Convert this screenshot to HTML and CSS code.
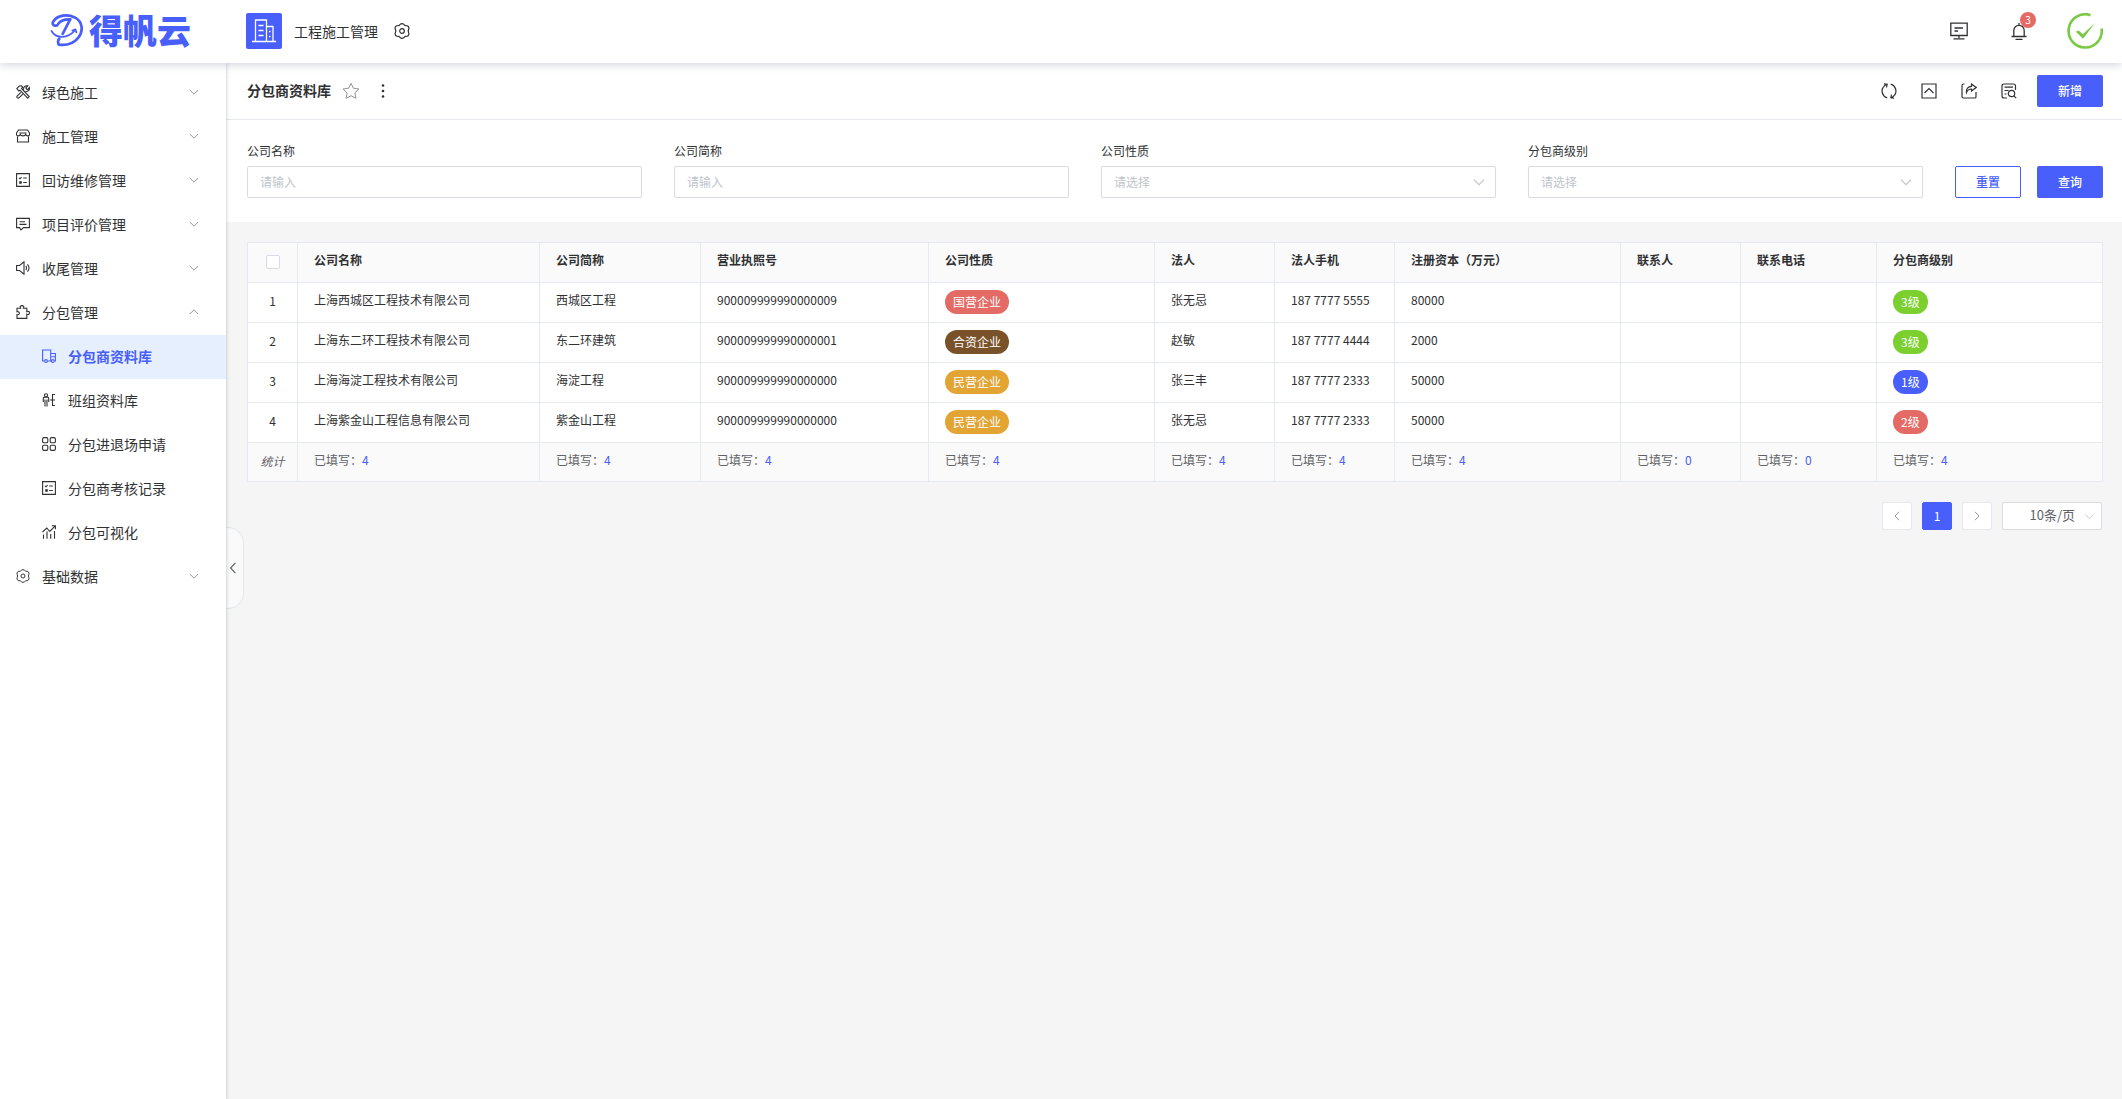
FILE: index.html
```html
<!DOCTYPE html>
<html lang="zh-CN">
<head>
<meta charset="utf-8">
<title>分包商资料库 - 工程施工管理</title>
<link rel="stylesheet" href="styles.css">
</head>
<body>
<svg class="sprite" aria-hidden="true">
  <symbol id="down" viewBox="0 0 10 10"><path d="M.8 3 5 7.2 9.2 3"/></symbol>
  <symbol id="up" viewBox="0 0 10 10"><path d="M.8 7 5 2.8 9.2 7"/></symbol>
  <symbol id="left" viewBox="0 0 10 10"><path d="M7 .8 3 5l4 4.2"/></symbol>
  <symbol id="right" viewBox="0 0 10 10"><path d="M3 .8 7 5 3 9.2"/></symbol>
  <symbol id="gear" viewBox="0 0 16 16"><path d="M6.300 1.200Q8 .2 9.700 1.200L11 2.600Q13 2.300 14 3.200 15.300 4.500 14.700 6L14.200 8l.5 2q.6 1.500-.7 2.800-1 .9-3 .6L9.700 14.800Q8 15.800 6.300 14.800L5 13.400Q3 13.700 2 12.800.7 11.500 1.300 10L1.800 8 1.300 6Q.7 4.500 2 3.200 3 2.300 5 2.600z"/><circle cx="8" cy="8" r="2.300"/></symbol>
  <symbol id="tools" viewBox="0 0 14 14"><path d="M.8 3.600 3.300 1 5.500.9 6.700 2.200 5.500 3.400 13.200 11.600 11.700 13.200 4 5.200 2.800 6zM4.900 7.300 1.300 10.800c-1.300 1.300.6 3.200 1.900 1.900L6.800 9.100M7.600 4.900C7.200 2.200 9 .3 11.800.8L9.900 2.800l.5 1.200 1.300.5L13.400 2.500c.6 2.600-1.400 4.400-3.900 4"/></symbol>
  <symbol id="shop" viewBox="0 0 14 14"><path d="M2.500 1h9l2 3v1.400c0 1-.8 1.500-1.700 1.500S10 6.400 9.700 5.500C9.400 6.400 8.300 6.900 7 6.900S4.600 6.400 4.300 5.500C4 6.400 3.100 6.900 2.200 6.900S.5 6.400.5 5.400V4zM1.500 7.500V13h11V7.500M3.500 4h7"/></symbol>
  <symbol id="list" viewBox="0 0 14 14"><path d="M.6.6h12.800v12.800H.6zM3 4.800l1 1 1.600-1.700M7.200 5h3.600M7.200 9.500h3.600"/><path d="M3.800 8.700h1.400v1.400H3.800z" fill="currentColor"/></symbol>
  <symbol id="chat" viewBox="0 0 14 14"><path d="M.6 1.400h12.800v9.200H7.500L5 13l-1.500-2.400H.6zM3.500 4.800H9M3.500 7.400h7"/></symbol>
  <symbol id="sound" viewBox="0 0 14 14"><path d="M.6 4.500h3L8 .8v12.400L3.600 9.500h-3zM9.800 5c1 1 1 3 0 4M11.400 3.300c2.200 2 2.200 5.400 0 7.400"/></symbol>
  <symbol id="puzzle" viewBox="0 0 14 14"><path d="M1 3.200h3.600C3.600 1.700 4.700.6 6 .6s2.400 1.100 1.400 2.600h3.400v3.500c1.500-.8 2.700 0 2.700 1.200s-1.200 2-2.700 1.300v4.200H1V9.600c3.200.8 3.200-3.600 0-2.900z"/></symbol>
  <symbol id="truck" viewBox="0 0 14 14"><path d="M2.500 12H.6V1h8.100v11H5.500M8.700 4.500h4.700V12h-1M9.500 7.700h3.900"/><circle cx="4" cy="12" r="1.400"/><circle cx="10.800" cy="12" r="1.400"/></symbol>
  <symbol id="team" viewBox="0 0 14 14"><circle cx="4" cy="2.300" r="1.600"/><path d="M1.300 9V5.200Q1.300 4.300 2.300 4.300h3.400q1 0 1 .9V9M3 6.500v7M5 6.500v7M13 1.500h-2.500v11H13M8 7h2.500M10.500 7H13"/></symbol>
  <symbol id="grid" viewBox="0 0 14 14"><rect x=".6" y=".6" width="5.200" height="5.200" rx="1.300"/><rect x="8.200" y=".6" width="5.200" height="5.200" rx="1.300"/><rect x=".6" y="8.200" width="5.200" height="5.200" rx="1.300"/><rect x="8.200" y="8.200" width="5.200" height="5.200" rx="1.300"/></symbol>
  <symbol id="chart" viewBox="0 0 14 14"><path d="M.5 7 4.800 3l3 3.500L13 1.200M9.800.8H13.400V4.300M1.500 9.500v4.200M5 6.500v7.200M8.700 9v4.700M12.500 6v7.700"/></symbol>
</svg>

<header class="topbar">
  <a class="logo" href="#" aria-label="得帆云">
    <svg class="logo-mark" viewBox="0 0 36 34"><path d="M7.500 11.500C4 13 1.500 11 3.500 7.500 8 1 18 0 25.500 3.500c8.500 4.500 9 14.500 3.500 21C24.500 30 17 32.500 9 31.500 7.800 29 8.200 27 9.500 25.500"/><path d="M8.500 10C11 6.500 16 5.200 21 5.500M20.500 6 13 20.500"/><path class="thin" d="M1.500 17.500C6 25.500 18 26 26 16.500M23 17 26.200 15.800l1 3.200"/></svg>
    <span>得帆云</span>
  </a>
  <div class="app">
    <span class="app-icon"><svg viewBox="0 0 24 24"><path d="M0 22.500h24M3.500 22.500V1h11v21.500M14.500 7.500H21v15M6.500 6.500h5M6.500 11.500h5M6.500 16.500h5M17 12.500h1.500M17 17.500h1.500"/></svg></span>
    <span>工程施工管理</span>
    <button class="icon-btn" aria-label="应用设置"><svg class="ic16"><use href="#gear"/></svg></button>
  </div>
  <div class="top-actions">
    <button class="icon-btn" aria-label="工作台"><svg class="ic18" viewBox="0 0 18 18"><path d="M.8 1.200h16.400v12.300H.8zM4.500 6h8.500M4.500 9H8M9 13.500v2.500M3.500 16.800h11"/></svg></button>
    <button class="icon-btn bell" aria-label="通知"><svg class="ic18" viewBox="0 0 18 18"><path d="M1.500 14.500h15M3.800 14.500V8.500a5.200 5.200 0 0 1 10.400 0v6M9 3V1M5.500 17.300h7"/></svg><span class="badge">3</span></button>
    <svg class="avatar" viewBox="0 0 36 36"><path class="ring" d="M23.500 2.200A16.600 16.600 0 1 0 34.600 15.500"/><path class="tick" d="m8.800 18.800 2.900-1.300 4 3.700L27.800 10.200 16 25.800z"/></svg>
  </div>
</header>

<div class="body">
  <nav class="sidebar">
    <a href="#"><svg><use href="#tools"/></svg><span>绿色施工</span><svg class="arrow"><use href="#down"/></svg></a>
    <a href="#"><svg><use href="#shop"/></svg><span>施工管理</span><svg class="arrow"><use href="#down"/></svg></a>
    <a href="#"><svg><use href="#list"/></svg><span>回访维修管理</span><svg class="arrow"><use href="#down"/></svg></a>
    <a href="#"><svg><use href="#chat"/></svg><span>项目评价管理</span><svg class="arrow"><use href="#down"/></svg></a>
    <a href="#"><svg><use href="#sound"/></svg><span>收尾管理</span><svg class="arrow"><use href="#down"/></svg></a>
    <a href="#"><svg><use href="#puzzle"/></svg><span>分包管理</span><svg class="arrow"><use href="#up"/></svg></a>
    <a class="sub active" href="#"><svg><use href="#truck"/></svg><span>分包商资料库</span></a>
    <a class="sub" href="#"><svg><use href="#team"/></svg><span>班组资料库</span></a>
    <a class="sub" href="#"><svg><use href="#grid"/></svg><span>分包进退场申请</span></a>
    <a class="sub" href="#"><svg><use href="#list"/></svg><span>分包商考核记录</span></a>
    <a class="sub" href="#"><svg><use href="#chart"/></svg><span>分包可视化</span></a>
    <a href="#"><svg><use href="#gear"/></svg><span>基础数据</span><svg class="arrow"><use href="#down"/></svg></a>
  </nav>

  <main class="main">
    <button class="collapse" aria-label="收起菜单"><svg><use href="#left"/></svg></button>

    <div class="titlebar">
      <h1>分包商资料库</h1>
      <button class="icon-btn star" aria-label="收藏"><svg class="ic18" viewBox="0 0 18 18"><path d="m9 1.300 2.400 4.900 5.500.8-4 3.800 1 5.500L9 13.700l-4.900 2.600 1-5.500-4-3.800 5.500-.8z"/></svg></button>
      <button class="icon-btn more" aria-label="更多"><svg class="ic16" viewBox="0 0 16 16"><circle cx="8" cy="2.500" r="1.300"/><circle cx="8" cy="8" r="1.300"/><circle cx="8" cy="13.500" r="1.300"/></svg></button>
      <div class="tools">
        <button class="icon-btn" aria-label="刷新"><svg class="ic16" viewBox="0 0 16 16"><path d="M6.200 14.800C1.500 13.500-.5 7.500 2.500 3.800 3.500 2.500 4.500 1.800 6 1.300M3 .8l3.200.4-.7 3.300M9.800 1.200c4.700 1.300 6.700 7.300 3.700 11-1 1.300-2 2-3.500 2.500M13 15.200l-3.200-.4.7-3.300"/></svg></button>
        <button class="icon-btn" aria-label="收起筛选"><svg class="ic16" viewBox="0 0 16 16"><path d="M1 1h14v14H1zM3.500 10 8 5.500l4.500 4.500"/></svg></button>
        <button class="icon-btn" aria-label="导出"><svg class="ic16" viewBox="0 0 16 16"><path d="M3.500 1H2.500Q1 1 1 2.500v11Q1 15 2.500 15h11.200q1.300 0 1.300-1.300V9M5.500 9.500C5 6 7 3.500 10.500 3.300V1L15.200 4.500 10.500 8V6C8 6 6.500 7 5.500 9.500z"/></svg></button>
        <button class="icon-btn" aria-label="查询记录"><svg class="ic16" viewBox="0 0 16 16"><path d="M6 15H3Q1 15 1 13V3Q1 1 3 1h9.500q2 0 2 2v4M3.500 4.200H12M3.500 7.500h4M3.500 11h2M12.700 12.700l2.500 2.500"/><circle cx="10.500" cy="10.500" r="3.200"/></svg></button>
        <button class="btn primary">新增</button>
      </div>
    </div>

    <form class="filters">
      <label>公司名称<input type="text" placeholder="请输入"></label>
      <label>公司简称<input type="text" placeholder="请输入"></label>
      <label>公司性质<span class="select"><select><option>请选择</option></select><svg><use href="#down"/></svg></span></label>
      <label>分包商级别<span class="select"><select><option>请选择</option></select><svg><use href="#down"/></svg></span></label>
      <div class="buttons">
        <button class="btn outline" type="reset">重置</button>
        <button class="btn primary" type="button">查询</button>
      </div>
    </form>

    <section class="content">
      <table>
        <colgroup><col class="w50"><col><col class="w161"><col class="w228"><col class="w226"><col class="w120"><col class="w120"><col class="w226"><col class="w120"><col class="w136"><col class="w226"></colgroup>
        <thead>
          <tr><th class="idx"><input type="checkbox" aria-label="全选"></th><th>公司名称</th><th>公司简称</th><th>营业执照号</th><th>公司性质</th><th>法人</th><th>法人手机</th><th>注册资本（万元）</th><th>联系人</th><th>联系电话</th><th>分包商级别</th></tr>
        </thead>
        <tbody>
          <tr><td class="idx">1</td><td>上海西城区工程技术有限公司</td><td>西城区工程</td><td>900009999990000009</td><td class="tags"><span class="tag red">国营企业</span></td><td>张无忌</td><td>187 7777 5555</td><td>80000</td><td></td><td></td><td class="tags"><span class="tag green">3级</span></td></tr>
          <tr><td class="idx">2</td><td>上海东二环工程技术有限公司</td><td>东二环建筑</td><td>900009999990000001</td><td class="tags"><span class="tag brown">合资企业</span></td><td>赵敏</td><td>187 7777 4444</td><td>2000</td><td></td><td></td><td class="tags"><span class="tag green">3级</span></td></tr>
          <tr><td class="idx">3</td><td>上海海淀工程技术有限公司</td><td>海淀工程</td><td>900009999990000000</td><td class="tags"><span class="tag amber">民营企业</span></td><td>张三丰</td><td>187 7777 2333</td><td>50000</td><td></td><td></td><td class="tags"><span class="tag blue">1级</span></td></tr>
          <tr><td class="idx">4</td><td>上海紫金山工程信息有限公司</td><td>紫金山工程</td><td>900009999990000000</td><td class="tags"><span class="tag amber">民营企业</span></td><td>张无忌</td><td>187 7777 2333</td><td>50000</td><td></td><td></td><td class="tags"><span class="tag red">2级</span></td></tr>
        </tbody>
        <tfoot>
          <tr><td class="idx"><i>统计</i></td><td>已填写：<b>4</b></td><td>已填写：<b>4</b></td><td>已填写：<b>4</b></td><td>已填写：<b>4</b></td><td>已填写：<b>4</b></td><td>已填写：<b>4</b></td><td>已填写：<b>4</b></td><td>已填写：<b>0</b></td><td>已填写：<b>0</b></td><td>已填写：<b>4</b></td></tr>
        </tfoot>
      </table>

      <div class="pager">
        <button class="page" aria-label="上一页"><svg><use href="#left"/></svg></button>
        <button class="page current">1</button>
        <button class="page" aria-label="下一页"><svg><use href="#right"/></svg></button>
        <span class="select size"><select aria-label="每页条数"><option>10条/页</option></select><svg><use href="#down"/></svg></span>
      </div>
    </section>
  </main>
</div>
</body>
</html>
```
FILE: styles.css
```css
* { box-sizing: border-box; }

body {
  margin: 0;
  min-height: 100vh;
  display: flex;
  flex-direction: column;
  font: 12px/20px "Noto Sans CJK SC", sans-serif;
  color: #303133;
  background: #f5f5f5;
}

button, input, select { font: inherit; color: inherit; margin: 0; }
button { cursor: pointer; padding: 0; border: 0; background: none; }
a { color: inherit; text-decoration: none; }
svg { display: block; flex: none; fill: none; stroke: currentColor; stroke-width: 1; }
.sprite { position: absolute; width: 0; height: 0; }

.ic16 { width: 16px; height: 16px; stroke-width: 1.2; }
.ic18 { width: 18px; height: 18px; stroke-width: 1.3; }
.icon-btn { color: #303133; }

/* top bar */
.topbar {
  position: relative;
  z-index: 2;
  display: flex;
  align-items: center;
  height: 63px;
  padding: 0 19px 2px 0;
  background: #fff;
  box-shadow: 0 2px 8px rgba(80, 95, 121, .25);
}
.logo {
  display: flex;
  align-items: center;
  gap: 4px;
  width: 246px;
  padding-left: 50px;
  color: #485ffb;
  font-size: 34px;
  line-height: 36px;
  font-weight: 900;
}
.logo span { padding-bottom: 2px; }
.logo-mark { width: 35px; height: 33px; stroke-width: 2.8; stroke-linejoin: round; stroke-linecap: round; }
.thin { stroke-width: 1.8; }
.app { display: flex; align-items: center; gap: 12px; font-size: 14px; }
.app .icon-btn { margin-left: 4px; }
.app-icon {
  display: grid;
  place-items: center;
  width: 36px;
  height: 36px;
  border-radius: 2px;
  color: #fff;
  background: #485ffb;
}
.app-icon svg { width: 24px; height: 24px; stroke-width: 1.3; }
.top-actions { display: flex; align-items: center; gap: 42px; margin-left: auto; }
.bell { position: relative; }
.badge {
  position: absolute;
  left: 10px;
  top: -10px;
  width: 16px;
  height: 16px;
  border-radius: 8px;
  color: #fff;
  background: #e46a65;
  font-size: 10px;
  line-height: 16px;
}
.avatar { width: 36px; height: 36px; margin-left: -3px; }
.ring { stroke: #7ac943; stroke-width: 2.6; }
.tick { fill: #7ac943; stroke: none; }

.body { flex: 1; display: flex; }

/* side menu */
.sidebar {
  position: relative;
  z-index: 1;
  flex: none;
  width: 226px;
  padding-top: 8px;
  background: #fff;
  box-shadow: 1px 0 3px rgba(80, 95, 140, .25);
}
.sidebar a {
  display: flex;
  align-items: center;
  gap: 12px;
  height: 44px;
  padding: 0 27px 2px 16px;
  font-size: 14px;
}
.sidebar svg { width: 14px; height: 14px; stroke-width: 1.1; }
.sidebar .arrow { width: 10px; height: 10px; margin-left: auto; color: #909399; stroke-width: 1; }
.sidebar .sub { padding-left: 42px; }
.sidebar .active { color: #485ffb; background: #e6effe; font-weight: 700; }

/* page */
.main { position: relative; flex: 1; min-width: 0; }
.collapse {
  position: absolute;
  left: 0;
  top: 464px;
  width: 18px;
  height: 82px;
  border: 1px solid #e4e7ed;
  border-left: 0;
  border-radius: 0 16px 16px 0;
  background: #fafafa;
  color: #606266;
}
.collapse svg { width: 12px; height: 12px; margin-left: 1px; }

.titlebar {
  display: flex;
  align-items: center;
  height: 57px;
  padding: 0 19px 0 21px;
  border-bottom: 1px solid #e8e9ee;
  background: #fff;
}
.titlebar h1 { margin: 0; padding-bottom: 2px; font-size: 14px; font-weight: 700; }
.star { margin-left: 11px; color: #909399; }
.star svg { stroke-width: 1; }
.more { margin-left: 15px; }
.more svg { fill: currentColor; stroke: none; }
.tools { display: flex; align-items: center; gap: 24px; margin-left: auto; }
.tools .btn { margin-left: -4px; }

.btn { width: 66px; height: 32px; border-radius: 2px; font-weight: 500; }
.primary { color: #fff; background: #485ffb; }
.outline { color: #485ffb; background: #fff; border: 1px solid #485ffb; }

.filters {
  display: flex;
  align-items: flex-end;
  gap: 32px;
  padding: 21px 19px 24px 21px;
  background: #fff;
}
.filters label { flex: 1; min-width: 0; }
.filters input, .select select {
  display: block;
  width: 100%;
  height: 32px;
  padding: 0 12px 1px;
  border: 1px solid #d8dae5;
  border-radius: 2px;
  background: #fff;
  outline: 0;
}
.filters input, .filters .select { margin-top: 5px; }
.filters input::placeholder { color: #c0c4cc; opacity: 1; }
.select { display: grid; align-items: center; justify-items: end; }
.select select, .select svg { grid-area: 1 / 1; }
.select select { appearance: none; color: #c0c4cc; }
.select svg { width: 12px; height: 12px; margin-right: 11px; color: #c0c4cc; pointer-events: none; }
.buttons { display: flex; gap: 16px; }

.content { padding: 20px 19px 20px 21px; }

/* data table */
table { width: 100%; border-collapse: collapse; table-layout: fixed; }
.w50 { width: 50px; }
.w120 { width: 120px; }
.w136 { width: 136px; }
.w161 { width: 161px; }
.w226 { width: 226px; }
.w228 { width: 228px; }
th, td {
  height: 40px;
  padding: 0 16px 5px;
  border: 1px solid #e6e9f2;
  text-align: left;
  white-space: nowrap;
  background: #fff;
}
th { color: #303133; font-weight: 700; }
th, tfoot td { background: #fafafa; }
tfoot td { height: 39px; padding-bottom: 4px; color: #606266; }
tfoot b { color: #485ffb; font-weight: 400; }
.idx { padding: 0 0 3px; text-align: center; }
th.idx { padding: 0 0 2px; }
.tags { padding-bottom: 2px; }
.idx input {
  appearance: none;
  display: block;
  width: 14px;
  height: 14px;
  margin: 0 auto;
  border: 1px solid #d8dae5;
  border-radius: 2px;
  background: #fff;
}
.tag {
  display: block;
  width: fit-content;
  height: 24px;
  padding: 0 8px;
  border-radius: 12px;
  line-height: 24px;
  color: #fff;
}
.red { background: #e46a65; }
.green { background: #7bd02f; }
.brown { background: #79522a; }
.amber { background: #e2a433; }
.blue { background: #485ffb; }

.pager {
  display: flex;
  justify-content: flex-end;
  gap: 10px;
  margin-top: 20px;
  padding-right: 1px;
  color: #606266;
}
.page {
  display: grid;
  place-items: center;
  width: 30px;
  height: 28px;
  border: 1px solid #e6e9f2;
  border-radius: 2px;
  background: #fff;
}
.page svg { width: 10px; height: 10px; color: #909399; }
.current { border-color: #485ffb; color: #fff; background: #485ffb; }
.size { width: 100px; }
.size select { height: 28px; padding: 0 26px 2px; text-align: right; color: #606266; font-size: 13px; }
.size svg { width: 9px; height: 9px; margin-right: 8px; }
```
